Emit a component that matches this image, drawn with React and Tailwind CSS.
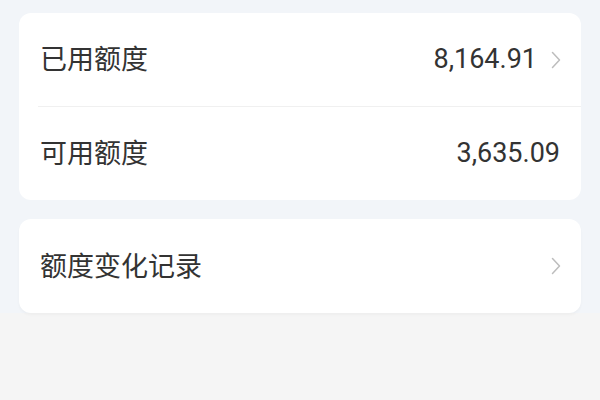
import React from "react";

function Chevron() {
  return (
    <svg width="12" height="20" viewBox="0 0 12 20" fill="none" className="shrink-0">
      <path d="M2.5 2.5 L9.5 10 L2.5 17.5" stroke="#bdbdbd" strokeWidth="1.5" strokeLinecap="round" strokeLinejoin="round" />
    </svg>
  );
}

export default function App() {
  const cjk = { fontFamily: '"Noto Sans CJK SC", "Noto Sans", sans-serif' };
  const num = { fontFamily: 'Roboto, "Noto Sans", sans-serif' };
  return (
    <div className="w-[600px] h-[400px] bg-[#f5f5f5] overflow-hidden">
      <div className="bg-[#f2f5f9] px-[19px] pt-[13px] flex flex-col gap-[19px]">
        <div className="bg-white rounded-[12px] flex flex-col">
          <div className="h-[93px] flex items-center pl-[21px] pr-[19px] text-[#333]">
            <span className="text-[27px] leading-none flex-1 pb-[4px]" style={cjk}>已用额度</span>
            <span className="text-[27px] leading-none" style={num}>8,164.91</span>
            <span className="ml-[13px] flex items-center"><Chevron /></span>
          </div>
          <div className="h-px bg-[#f0f0f0] ml-[19px]" />
          <div className="h-[93px] flex items-center pl-[21px] pr-[21px] text-[#333]">
            <span className="text-[27px] leading-none flex-1 pb-[4px]" style={cjk}>可用额度</span>
            <span className="text-[27px] leading-none" style={num}>3,635.09</span>
          </div>
        </div>
        <div className="bg-white rounded-[12px] h-[94px] flex items-center pl-[21px] pr-[19px] text-[#333] shadow-[0_2px_3px_rgba(0,0,0,0.03)]">
          <span className="text-[27px] leading-none flex-1 pb-[4px]" style={cjk}>额度变化记录</span>
          <Chevron />
        </div>
      </div>
    </div>
  );
}
